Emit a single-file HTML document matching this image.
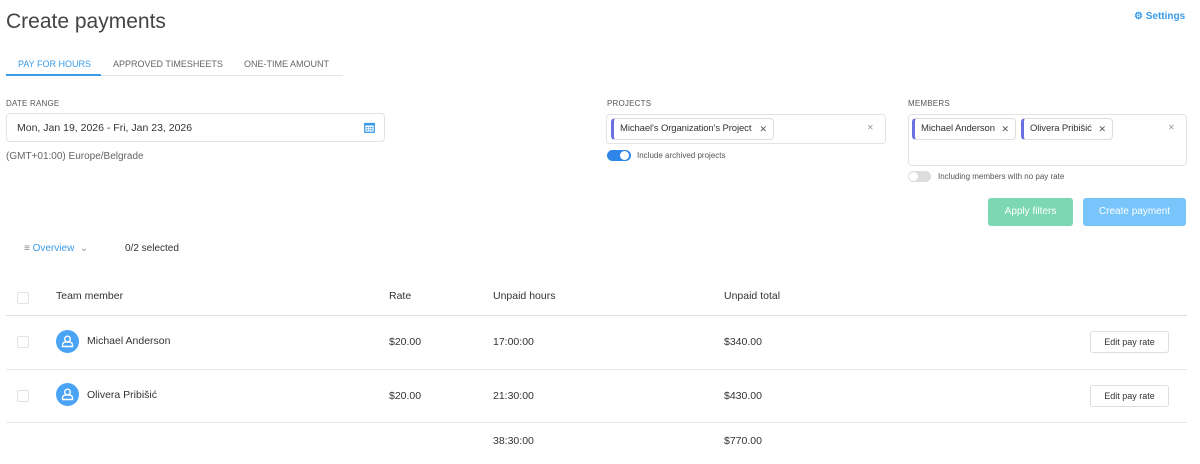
<!DOCTYPE html>
<html><head><meta charset="utf-8"><style>
*{box-sizing:border-box;margin:0;padding:0}
body{width:1200px;height:464px;background:#fff;font-family:"Liberation Sans",sans-serif;color:#333;position:relative;overflow:hidden}
.a{position:absolute;white-space:nowrap}
.lbl{font-size:8px;color:#555;letter-spacing:.2px}
.box{border:1px solid #e3e3e3;border-radius:4px;background:#fff}
.tag{position:absolute;white-space:nowrap;border:1px solid #ddd;border-left:3px solid #6c6fe0;border-radius:4px;height:22px;font-size:9.5px;line-height:20px;padding-left:6px;color:#333;letter-spacing:-0.1px}
.x{font-size:9px;color:#555;position:absolute;right:6px;top:0}
.cb{position:absolute;width:12px;height:12px;border:1px solid #e2e2e2;border-radius:2px}
.av{position:absolute;width:23px;height:23px;border-radius:50%;background:#4aa3f5}
.t{position:absolute;font-size:10.5px;color:#333;white-space:nowrap}
.btn{position:absolute;border:1px solid #ddd;border-radius:3px;width:79px;height:22px;font-size:9px;text-align:center;line-height:20px;color:#333}
.hr{position:absolute;left:6px;width:1181px;height:1px;background:#e6e6e6}
</style></head><body>
<div class="a" style="left:6px;top:10px;font-size:21px;color:#444">Create payments</div>
<div class="a" style="left:1134px;top:11px;font-size:10px;color:#3a9be8;font-weight:bold">⚙ Settings</div>
<div class="a" style="left:18px;top:59px;font-size:9px;color:#3a9be8">PAY FOR HOURS</div>
<div class="a" style="left:113px;top:59px;font-size:9px;color:#666">APPROVED TIMESHEETS</div>
<div class="a" style="left:244px;top:59px;font-size:9px;color:#666">ONE-TIME AMOUNT</div>
<div class="a" style="left:6px;top:75px;width:337px;height:1px;background:#e6e6e6"></div>
<div class="a" style="left:6px;top:74px;width:95px;height:2px;background:#3a9be8"></div>

<div class="a lbl" style="left:6px;top:99px">DATE RANGE</div>
<div class="a box" style="left:6px;top:113px;width:379px;height:29px"></div>
<div class="a" style="left:17px;top:122px;font-size:10.5px">Mon, Jan 19, 2026 - Fri, Jan 23, 2026</div>
<svg class="a" style="left:364px;top:122px" width="11" height="11" viewBox="0 0 11 11"><rect x="0.75" y="1.5" width="9.5" height="8.75" fill="none" stroke="#3a9be8" stroke-width="1.3"/><rect x="0.75" y="1.5" width="9.5" height="2" fill="#3a9be8"/><g fill="#3a9be8"><rect x="2.5" y="5" width="1.5" height="1.3"/><rect x="4.8" y="5" width="1.5" height="1.3"/><rect x="7" y="5" width="1.5" height="1.3"/><rect x="2.5" y="7.2" width="1.5" height="1.3"/><rect x="4.8" y="7.2" width="1.5" height="1.3"/><rect x="7" y="7.2" width="1.5" height="1.3"/></g></svg>
<div class="a" style="left:6px;top:151px;font-size:10px;color:#666">(GMT+01:00) Europe/Belgrade</div>

<div class="a lbl" style="left:607px;top:99px">PROJECTS</div>
<div class="a box" style="left:606px;top:114px;width:280px;height:30px"></div>
<div class="tag" style="left:611px;top:118px;width:163px">Michael's Organization's Project<span class="x">✕</span></div>
<div class="a" style="left:867px;top:123px;color:#999;font-size:8px">✕</div>
<div class="a" style="left:607px;top:150px;width:24px;height:11px;border-radius:6px;background:#2f86e8"></div>
<div class="a" style="left:620px;top:151px;width:9px;height:9px;border-radius:50%;background:#fff"></div>
<div class="a" style="left:637px;top:151px;font-size:8px;color:#555">Include archived projects</div>

<div class="a lbl" style="left:908px;top:99px">MEMBERS</div>
<div class="a box" style="left:908px;top:114px;width:279px;height:52px"></div>
<div class="tag" style="left:912px;top:118px;width:104px">Michael Anderson<span class="x">✕</span></div>
<div class="tag" style="left:1021px;top:118px;width:92px">Olivera Pribišić<span class="x">✕</span></div>
<div class="a" style="left:1168px;top:123px;color:#999;font-size:8px">✕</div>
<div class="a" style="left:908px;top:171px;width:23px;height:11px;border-radius:6px;background:#ddd"></div>
<div class="a" style="left:909px;top:172px;width:9px;height:9px;border-radius:50%;background:#fff"></div>
<div class="a" style="left:938px;top:172px;font-size:8px;color:#555">Including members with no pay rate</div>

<div class="a" style="left:988px;top:198px;width:85px;height:28px;border-radius:3px;background:#7cd8b3;color:#fff;font-size:10px;text-align:center;line-height:28px">Apply filters</div>
<div class="a" style="left:1083px;top:198px;width:103px;height:28px;border-radius:3px;background:#78c5fb;color:#fff;font-size:10px;text-align:center;line-height:28px">Create payment</div>

<div class="a" style="left:24px;top:243px;font-size:10px;color:#3a9be8"><span style="color:#888">≡</span> Overview &nbsp;<span style="color:#999">⌄</span></div>
<div class="a" style="left:125px;top:243px;font-size:10px">0/2 selected</div>

<div class="cb" style="left:17px;top:292px"></div>
<div class="t" style="left:56px;top:290px">Team member</div>
<div class="t" style="left:389px;top:290px">Rate</div>
<div class="t" style="left:493px;top:290px">Unpaid hours</div>
<div class="t" style="left:724px;top:290px">Unpaid total</div>
<div class="hr" style="top:315px;background:#ddd"></div>

<div class="cb" style="left:17px;top:336px"></div>
<div class="av" style="left:56px;top:330px"><svg width="23" height="23" viewBox="0 0 23 23"><circle cx="11.5" cy="9" r="2.8" fill="none" stroke="#fff" stroke-width="1.4"/><path d="M6.5 16.5v-1.5a3 3 0 0 1 3-3h4a3 3 0 0 1 3 3v1.5z" fill="none" stroke="#fff" stroke-width="1.4"/></svg></div>
<div class="t" style="left:87px;top:335px">Michael Anderson</div>
<div class="t" style="left:389px;top:336px">$20.00</div>
<div class="t" style="left:493px;top:336px">17:00:00</div>
<div class="t" style="left:724px;top:336px">$340.00</div>
<div class="btn" style="left:1090px;top:331px">Edit pay rate</div>
<div class="hr" style="top:369px"></div>

<div class="cb" style="left:17px;top:390px"></div>
<div class="av" style="left:56px;top:383px"><svg width="23" height="23" viewBox="0 0 23 23"><circle cx="11.5" cy="9" r="2.8" fill="none" stroke="#fff" stroke-width="1.4"/><path d="M6.5 16.5v-1.5a3 3 0 0 1 3-3h4a3 3 0 0 1 3 3v1.5z" fill="none" stroke="#fff" stroke-width="1.4"/></svg></div>
<div class="t" style="left:87px;top:389px">Olivera Pribišić</div>
<div class="t" style="left:389px;top:390px">$20.00</div>
<div class="t" style="left:493px;top:390px">21:30:00</div>
<div class="t" style="left:724px;top:390px">$430.00</div>
<div class="btn" style="left:1090px;top:385px">Edit pay rate</div>
<div class="hr" style="top:422px"></div>

<div class="t" style="left:493px;top:435px">38:30:00</div>
<div class="t" style="left:724px;top:435px">$770.00</div>
</body></html>
